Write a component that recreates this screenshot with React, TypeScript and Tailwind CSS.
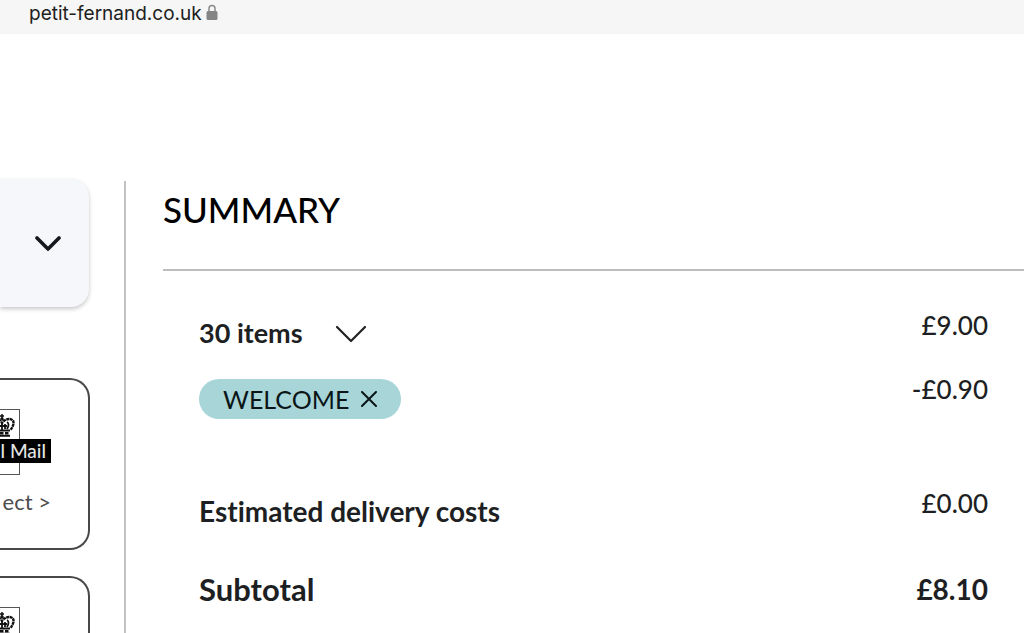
import React from "react";

function Crown() {
  return (
    <svg
      viewBox="0 0 28 24"
      className="h-6 w-7 shrink-0"
      fill="none"
      stroke="#111"
      aria-hidden="true"
    >
      <path d="M15 1v6M13 3h4" strokeWidth="1.500" />
      <circle cx="15" cy="6" r="1.800" fill="#111" stroke="none" />
      <path
        d="M7 17C4 13 2 8 6 6.500C9 5 13 7 15 10C17 7 21 5 24.500 6.500C28 8 26.500 13 23.500 17"
        strokeWidth="2.400"
        strokeDasharray="3 0.500"
      />
      <path
        d="M10 16C8 13 8 10 10 9M20 16C22 13 22 10 20 9M15 9v8M12 11v5M18 11v5M11 13h9"
        strokeWidth="1.800"
      />
      <path d="M7 17.500h16M7 22.800h16" strokeWidth="2" />
      <path d="M8 20.200h14" strokeWidth="2.600" strokeDasharray="3.500 1.500" />
    </svg>
  );
}

function CarrierCard() {
  return (
    <button
      type="button"
      className="flex h-[172px] w-full flex-col items-start rounded-r-[20px] border-2 border-l-0 border-[#48484a] bg-white pt-[29px] text-left"
    >
      <span className="relative block h-[66px] w-5 shrink-0 border border-l-0 border-[#555]">
        <span className="flex w-[19px] justify-end overflow-hidden pt-[3px] pr-1">
          <Crown />
        </span>
        <span className="absolute top-[29px] left-0 flex h-6 w-[51px] items-center justify-end overflow-hidden bg-black pr-[5px] text-[19px] leading-6 font-medium whitespace-nowrap text-[#e4e4e4]">
          l Mail
        </span>
      </span>
      <span className="mt-[15px] block w-[51px] text-right text-[22px] leading-6 whitespace-nowrap text-[#4d4d4d]">
        ect &gt;
      </span>
    </button>
  );
}

export default function App() {
  return (
    <div className="flex h-screen flex-col overflow-hidden bg-white font-['Lato',sans-serif] text-[#1d1f23] [font-variant-ligatures:no-common-ligatures]">
      <header className="flex h-[34px] shrink-0 items-start gap-1 bg-[#f6f6f6] pt-0.5 pl-[29px] font-['Inter',sans-serif] text-[19px] leading-6 text-[#202020]">
        <span>petit-fernand.co.uk</span>
        <svg viewBox="0 0 12 17" className="mt-[2px] h-[17px] w-3" aria-hidden="true">
          <path d="M3 8V4.500a3 3 0 0 1 6 0V8" fill="none" stroke="#8b8b8b" strokeWidth="1.500" />
          <rect x="0.500" y="7" width="11" height="9" rx="1.500" fill="#858585" />
        </svg>
      </header>
      <main className="flex min-h-0 flex-1">
        <aside className="w-[90px] shrink-0 pt-[145px]">
          <button
            type="button"
            aria-label="Expand delivery options"
            className="flex h-32 w-[89px] items-center justify-end rounded-r-[18px] bg-[#f6f7fa] pr-7 shadow-[0_2px_4px_rgba(0,0,0,0.22)]"
          >
            <svg viewBox="0 0 28 18" className="h-[18px] w-7" fill="none" aria-hidden="true">
              <path d="M4 4l11 11L26 4" stroke="#15191e" strokeWidth="3.600" strokeLinecap="round" strokeLinejoin="round" />
            </svg>
          </button>
          <div className="mt-[71px] flex flex-col gap-[26px]">
            <CarrierCard />
            <CarrierCard />
          </div>
        </aside>
        <section className="mt-[147px] ml-[34px] min-w-0 flex-1 border-l-2 border-[#c2c2c2] pl-[37px]">
          <h1 className="h-[90px] border-b-2 border-[#bdbdbd] pt-1.5 text-[35px] leading-[44px] font-medium text-black">
            SUMMARY
          </h1>
          <div className="pr-9 pl-9 text-[26px] leading-8">
            <div className="flex items-start justify-between pt-[38px]">
              <button type="button" className="mt-2 flex items-center gap-8 text-[27px] font-bold">
                <span>30 items</span>
                <svg viewBox="0 0 32 20" className="mt-0.5 h-5 w-8" fill="none" aria-hidden="true">
                  <path d="M2 3l14 14L30 3" stroke="#222" strokeWidth="2.200" strokeLinecap="round" strokeLinejoin="round" />
                </svg>
              </button>
              <span className="font-medium">£9.00</span>
            </div>
            <div className="flex items-start justify-between pt-6">
              <button
                type="button"
                aria-label="Remove WELCOME"
                className="mt-1.5 flex h-10 w-[202px] items-center justify-between rounded-full bg-[#a8d5d8] pr-6 pl-6 text-[25px] text-[#0b1517]"
              >
                <span>WELCOME</span>
                <svg viewBox="0 0 16 16" className="size-4" fill="none" aria-hidden="true">
                  <path d="M1 1l14 14M15 1L1 15" stroke="#0b1517" strokeWidth="2" strokeLinecap="round" />
                </svg>
              </button>
              <span className="font-medium">-£0.90</span>
            </div>
            <div className="flex items-start justify-between pt-[68px]">
              <span className="mt-2 text-[28px] font-bold">Estimated delivery costs</span>
              <span className="font-medium">£0.00</span>
            </div>
            <div className="flex items-center justify-between pt-[46px] text-[28px] font-bold">
              <span className="text-[31px]">Subtotal</span>
              <span>£8.10</span>
            </div>
          </div>
        </section>
      </main>
    </div>
  );
}
